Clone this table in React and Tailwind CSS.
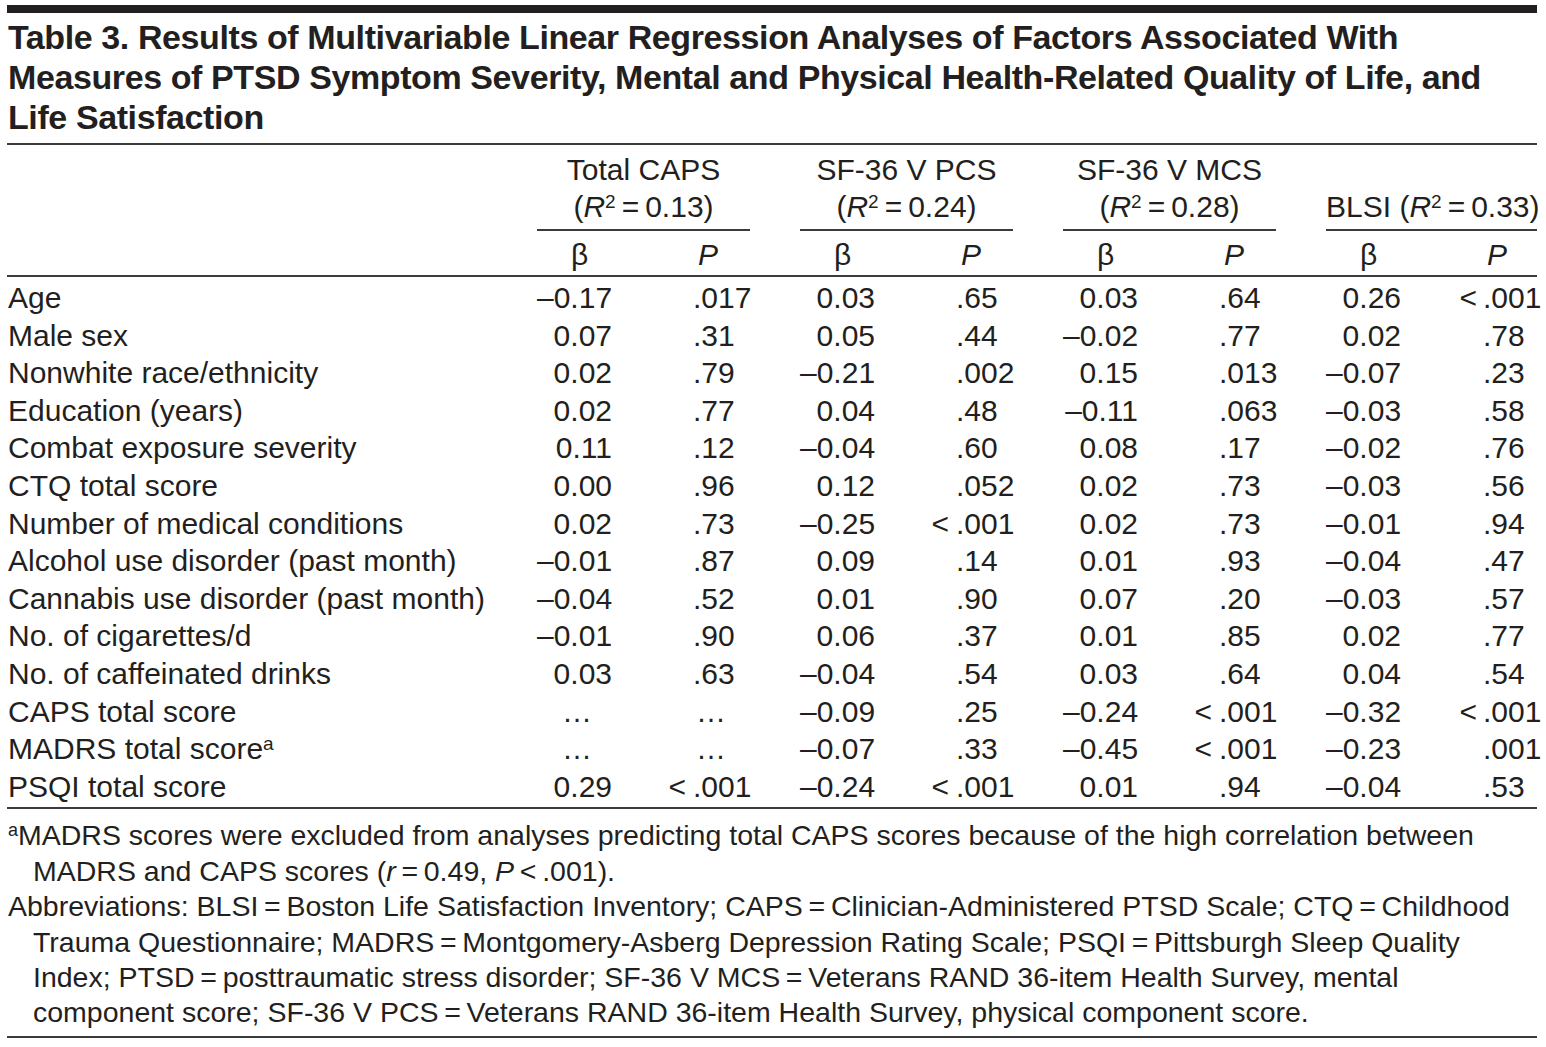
import React from "react";

const COLS =
  "grid grid-cols-[530px_75px_138px_50px_75px_138px_50px_75px_138px_50px_75px_136px]";

const groups = [
  { title: "Total CAPS", r: "0.13" },
  { title: "SF-36 V PCS", r: "0.24" },
  { title: "SF-36 V MCS", r: "0.28" },
  { title: null, prefix: "BLSI ", r: "0.33" },
];

const rows = [
  ["Age", "–0.17", ".017", "0.03", ".65", "0.03", ".64", "0.26", "<.001"],
  ["Male sex", "0.07", ".31", "0.05", ".44", "–0.02", ".77", "0.02", ".78"],
  ["Nonwhite race/ethnicity", "0.02", ".79", "–0.21", ".002", "0.15", ".013", "–0.07", ".23"],
  ["Education (years)", "0.02", ".77", "0.04", ".48", "–0.11", ".063", "–0.03", ".58"],
  ["Combat exposure severity", "0.11", ".12", "–0.04", ".60", "0.08", ".17", "–0.02", ".76"],
  ["CTQ total score", "0.00", ".96", "0.12", ".052", "0.02", ".73", "–0.03", ".56"],
  ["Number of medical conditions", "0.02", ".73", "–0.25", "<.001", "0.02", ".73", "–0.01", ".94"],
  ["Alcohol use disorder (past month)", "–0.01", ".87", "0.09", ".14", "0.01", ".93", "–0.04", ".47"],
  ["Cannabis use disorder (past month)", "–0.04", ".52", "0.01", ".90", "0.07", ".20", "–0.03", ".57"],
  ["No. of cigarettes/d", "–0.01", ".90", "0.06", ".37", "0.01", ".85", "0.02", ".77"],
  ["No. of caffeinated drinks", "0.03", ".63", "–0.04", ".54", "0.03", ".64", "0.04", ".54"],
  ["CAPS total score", "…", "…", "–0.09", ".25", "–0.24", "<.001", "–0.32", "<.001"],
  ["MADRS total score", "…", "…", "–0.07", ".33", "–0.45", "<.001", "–0.23", ".001"],
  ["PSQI total score", "0.29", "<.001", "–0.24", "<.001", "0.01", ".94", "–0.04", ".53"],
];

const Rule = () => <div className="h-[2px] bg-[#3b3b3b]" />;

const Eq = () => <span>{"\u2009=\u2009"}</span>;

// P values line up on the decimal point; "<" hangs to the left
const PCell = ({ value, last }) => {
  const lt = value.startsWith("<");
  const rest = lt ? value.slice(1) : value;
  return (
    <div className="whitespace-nowrap">
      <span
        className={`inline-block text-right ${last ? "w-[82px] pr-[6px]" : "w-[81px] pr-[7px]"}`}
      >
        {lt ? "<" : ""}
      </span>
      {rest === "…" ? <span className="pl-[3px]">…</span> : rest}
    </div>
  );
};

const BetaCell = ({ value }) => (
  <div className={`text-right whitespace-nowrap ${value === "…" ? "pr-[20px]" : ""}`}>
    {value}
  </div>
);

export default function App() {
  return (
    <div className="min-h-[1047px] bg-white text-[#231f20] font-['Liberation_Sans',Arial,sans-serif] text-[30px]">
      <div className="pl-[7px] pt-[5px] w-[1537px]">
        {/* top bar */}
        <div className="h-[8px] bg-[#231f20]" />

        {/* title */}
        <div className="mt-[4px] pl-[1px] font-bold text-[34px] tracking-[-0.4px] leading-[40px] whitespace-nowrap">
          <div>Table 3. Results of Multivariable Linear Regression Analyses of Factors Associated With</div>
          <div>Measures of PTSD Symptom Severity, Mental and Physical Health-Related Quality of Life, and</div>
          <div>Life Satisfaction</div>
        </div>

        <div className="mt-[6px]">
          <Rule />
        </div>

        {/* column groups */}
        <div className={`${COLS} pt-[8px] leading-[37px]`}>
          <div />
          {groups.map((g, i) => (
            <React.Fragment key={i}>
              <div className="col-span-2 flex flex-col justify-end h-[78px] pb-[4px] border-b-2 border-[#3b3b3b] text-center whitespace-nowrap">
                {g.title && <div>{g.title}</div>}
                <div>
                  {g.prefix}(<i>R</i>
                  <sup className="text-[19px]">2</sup>
                  <Eq />
                  {g.r})
                </div>
              </div>
              {i < 3 && <div />}
            </React.Fragment>
          ))}
        </div>

        {/* beta / P labels */}
        <div className={`${COLS} pt-[5px] pb-[2px] leading-[37px]`}>
          <div />
          {groups.map((g, i) => (
            <React.Fragment key={i}>
              <div className="pl-[34px]">β</div>
              <div className="pl-[86px] italic">P</div>
              {i < 3 && <div />}
            </React.Fragment>
          ))}
        </div>

        <Rule />

        {/* body */}
        <div className="pt-[2px] pb-[2px] leading-[37.6px]">
          {rows.map((r) => (
            <div key={r[0]} className={COLS}>
              <div className="pl-[1px] whitespace-nowrap">
                {r[0]}
                {r[0] === "MADRS total score" && (
                  <sup className="text-[19px]">a</sup>
                )}
              </div>
              {[0, 1, 2, 3].map((g) => (
                <React.Fragment key={g}>
                  <BetaCell value={r[1 + g * 2]} />
                  <PCell value={r[2 + g * 2]} last={g === 3} />
                  {g < 3 && <div />}
                </React.Fragment>
              ))}
            </div>
          ))}
        </div>

        <Rule />

        {/* footnotes */}
        <div className="pt-[9px] pb-[5px] pl-[1px] text-[28.5px] leading-[35.4px] whitespace-nowrap">
          <div>
            <div>
              <sup className="text-[18px]">a</sup>MADRS scores were excluded from analyses predicting total CAPS scores because of the high correlation between
            </div>
            <div className="pl-[25px]">
              MADRS and CAPS scores (<i>r</i>
              <Eq />
              0.49, <i>P</i>
              {"\u2009<\u2009"}.001).
            </div>
          </div>
          <div>
            <div>
              Abbreviations: BLSI<Eq />Boston Life Satisfaction Inventory; CAPS<Eq />Clinician-Administered PTSD Scale; CTQ<Eq />Childhood
            </div>
            <div className="pl-[25px]">
              Trauma Questionnaire; MADRS<Eq />Montgomery-Asberg Depression Rating Scale; PSQI<Eq />Pittsburgh Sleep Quality
            </div>
            <div className="pl-[25px]">
              Index; PTSD<Eq />posttraumatic stress disorder; SF-36 V MCS<Eq />Veterans RAND 36-item Health Survey, mental
            </div>
            <div className="pl-[25px]">
              component score; SF-36 V PCS<Eq />Veterans RAND 36-item Health Survey, physical component score.
            </div>
          </div>
        </div>

        <Rule />
      </div>
    </div>
  );
}
